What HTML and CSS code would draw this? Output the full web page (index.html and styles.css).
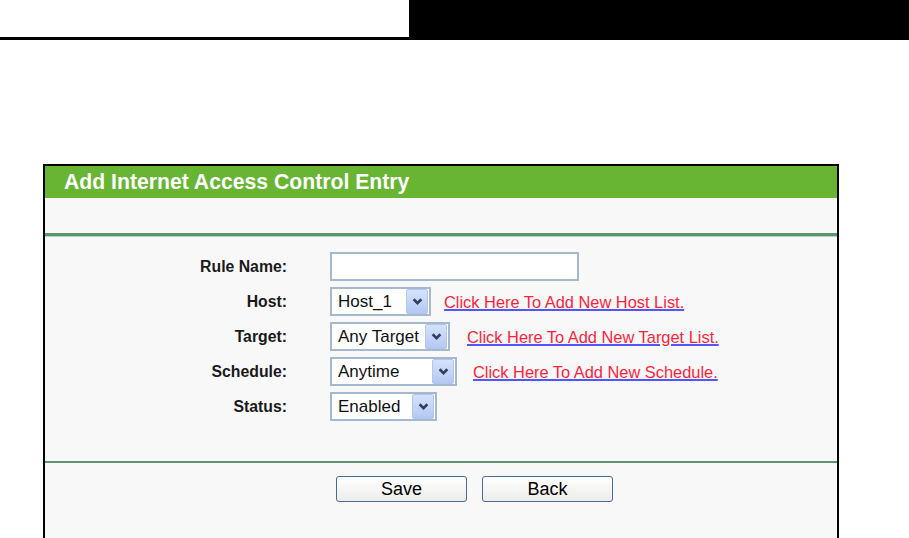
FILE: index.html
```html
<!DOCTYPE html>
<html lang="en">
<head>
  <meta charset="UTF-8" />
  <title>Add Internet Access Control Entry</title>
  <link rel="stylesheet" href="styles.css">
</head>
<body>
  <div class="topbar">
    <div class="topbar-left"></div>
    <div class="topbar-right"></div>
  </div>

  <div class="panel">
    <div class="panel-title">Add Internet Access Control Entry</div>
    <div class="panel-blank"></div>

    <form class="entry-form">
      <label class="field-label" for="ruleName">Rule Name:</label>
      <div class="field"><input class="text-input" id="ruleName" type="text"></div>

      <div class="field-label">Host:</div>
      <div class="field">
        <div class="select select-host"><span class="select-value">Host_1</span><span class="select-arrow"><svg viewBox="0 0 10 8"><path d="M1.5 2l3.5 3.5 3.5-3.5"/></svg></span></div>
        <a class="add-link" href="#">Click Here To Add New Host List.</a>
      </div>

      <div class="field-label">Target:</div>
      <div class="field">
        <div class="select select-target"><span class="select-value">Any Target</span><span class="select-arrow"><svg viewBox="0 0 10 8"><path d="M1.5 2l3.5 3.5 3.5-3.5"/></svg></span></div>
        <a class="add-link" href="#">Click Here To Add New Target List.</a>
      </div>

      <div class="field-label">Schedule:</div>
      <div class="field">
        <div class="select select-schedule"><span class="select-value">Anytime</span><span class="select-arrow"><svg viewBox="0 0 10 8"><path d="M1.5 2l3.5 3.5 3.5-3.5"/></svg></span></div>
        <a class="add-link" href="#">Click Here To Add New Schedule.</a>
      </div>

      <div class="field-label">Status:</div>
      <div class="field">
        <div class="select select-status"><span class="select-value">Enabled</span><span class="select-arrow"><svg viewBox="0 0 10 8"><path d="M1.5 2l3.5 3.5 3.5-3.5"/></svg></span></div>
      </div>
    </form>

    <div class="panel-footer">
      <button class="btn" type="button">Save</button>
      <button class="btn" type="button">Back</button>
    </div>
  </div>
</body>
</html>
```

FILE: styles.css
```css
body {
  margin: 0;
  background: #fff;
  font-family: 'Liberation Sans', Arial, sans-serif;
  color: #000;
}
.topbar {
  display: flex;
  height: 40px;
}
.topbar-left {
  flex: 0 0 409px;
  height: 37px;
  border-bottom: 3px solid #000;
}
.topbar-right {
  flex: 1;
  background: #000;
}
.panel {
  margin: 124px 0 0 43px;
  width: 792px;
  border: 2px solid #000;
  background: #f8f8f8;
}
.panel-title {
  height: 32px;
  background: #67b532;
  color: #fff;
  font-weight: bold;
  font-size: 21.2px;
  line-height: 32px;
  padding-left: 19px;
}
.panel-blank {
  height: 35px;
  border-bottom: 3px solid #5a9470;
  box-shadow: 0 1px 0 #b9d3c2;
}
.entry-form {
  display: grid;
  grid-template-columns: 242px 1fr;
  grid-auto-rows: 35px;
  column-gap: 43px;
  align-items: center;
  padding: 13px 0 37px;
  border-bottom: 2px solid #5a9470;
}
.field-label {
  text-align: right;
  font-weight: bold;
  font-size: 15.8px;
  color: #1a1a1a;
}
.field {
  display: flex;
  align-items: center;
  gap: 14px;
}
.text-input {
  box-sizing: border-box;
  width: 249px;
  height: 29px;
  border: 2px solid #a4b8cf;
  background: #fff;
  margin: 0;
}
.select {
  box-sizing: border-box;
  display: flex;
  align-items: center;
  justify-content: space-between;
  height: 29px;
  border: 2px solid #a4b8cf;
  background: #fff;
  padding: 0 1px 0 6px;
  font-size: 17px;
  color: #111;
}
.select-host { width: 101px; }
.select-target { width: 120px; }
.select-schedule { width: 127px; }
.select-status { width: 107px; }
.select-arrow {
  display: flex;
  align-items: center;
  justify-content: center;
  width: 20px;
  height: 23px;
  border: 1px solid #b2c6ec;
  border-radius: 2px;
  background: linear-gradient(#d6e2fb, #b3c8f3);
}
.select-arrow svg {
  width: 11px;
  height: 9px;
  fill: none;
  stroke: #33405e;
  stroke-width: 2.4;
}
.select-host + .add-link { margin-left: -1px; }
.select-target + .add-link { margin-left: 3px; }
.select-schedule + .add-link { margin-left: 2px; }
.add-link {
  font-size: 16.4px;
  color: #ff1f3d;
  text-decoration: underline;
  text-decoration-color: #5555ff;
  text-decoration-thickness: 2px;
  padding-top: 2px;
}
.panel-footer {
  display: flex;
  gap: 15px;
  padding: 13px 0 40px 291px;
}
.btn {
  width: 131px;
  height: 26px;
  border: 1px solid #4a6a92;
  border-radius: 3px;
  background: linear-gradient(#ffffff, #ececea);
  font-family: inherit;
  font-size: 18px;
  color: #000;
  padding: 0;
}
```
